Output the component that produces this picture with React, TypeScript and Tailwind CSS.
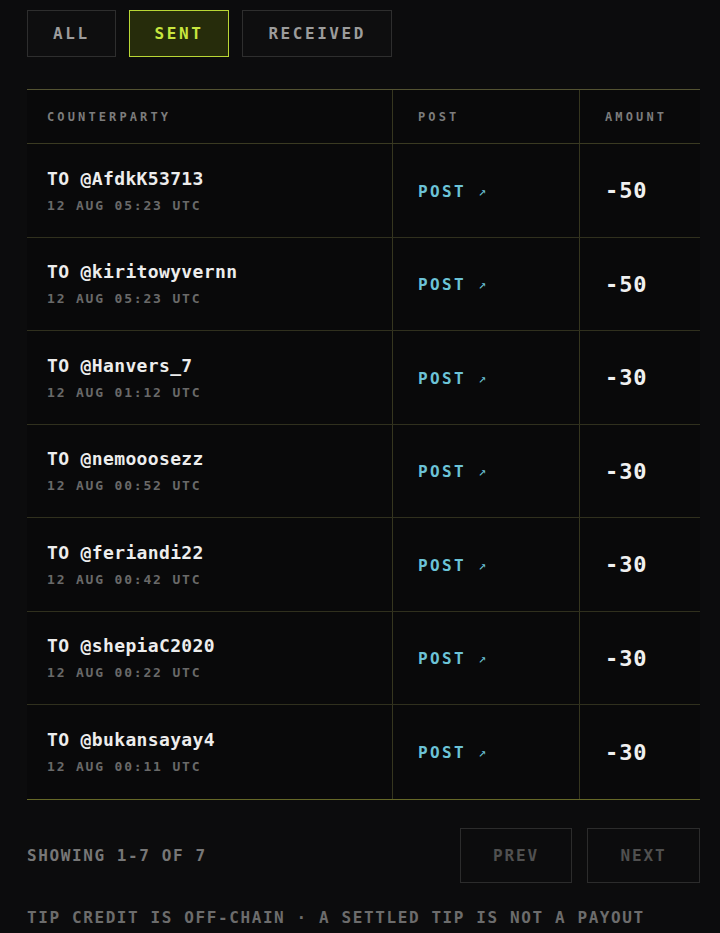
const rows = [
  { handle: '@AfdkK53713', time: '12 AUG 05:23 UTC', amount: -50 },
  { handle: '@kiritowyvernn', time: '12 AUG 05:23 UTC', amount: -50 },
  { handle: '@Hanvers_7', time: '12 AUG 01:12 UTC', amount: -30 },
  { handle: '@nemooosezz', time: '12 AUG 00:52 UTC', amount: -30 },
  { handle: '@feriandi22', time: '12 AUG 00:42 UTC', amount: -30 },
  { handle: '@shepiaC2020', time: '12 AUG 00:22 UTC', amount: -30 },
  { handle: '@bukansayay4', time: '12 AUG 00:11 UTC', amount: -30 },
]

const tabs = ['ALL', 'SENT', 'RECEIVED']

export default function App() {
  return (
    <div
      className="min-h-[933px] w-full bg-[#0c0c0d] pl-[27px] pr-[20px] pt-[10px] text-[#e8e8e8]"
      style={{ fontFamily: '"DejaVu Sans Mono", "Liberation Mono", monospace' }}
    >
      <div className="flex gap-[13px]">
        {tabs.map((t) => {
          const active = t === 'SENT'
          return (
            <button
              key={t}
              type="button"
              className={[
                'flex h-[47px] items-center border px-[25px] text-[16px] font-bold tracking-[0.16em]',
                active
                  ? 'border-[#b9d735] bg-[#262c0b] text-[#c8e63e]'
                  : 'border-[#2e2e2e] bg-[#0e0e0f] text-[#9c9c9c]',
              ].join(' ')}
            >
              {t}
            </button>
          )
        })}
      </div>

      <div className="mt-[32px] border-t border-b border-t-[#545332] border-b-[#666828] bg-[#09090a]">
        <div className="grid h-[54px] grid-cols-[366px_187px_1fr] border-b border-[#3a3a22] text-[12px] font-bold tracking-[0.26em] text-[#7c7c7c]">
          <div className="flex items-center border-r border-[#36361f] pl-[20px]">COUNTERPARTY</div>
          <div className="flex items-center border-r border-[#36361f] pl-[25px]">POST</div>
          <div className="flex items-center pl-[25px]">AMOUNT</div>
        </div>
        {rows.map((r, i) => (
          <div
            key={r.handle}
            className={[
              'grid grid-cols-[366px_187px_1fr]',
              i % 2 === 0 ? 'h-[94px]' : 'h-[93px]',
              i < rows.length - 1 ? 'border-b border-[#30301e]' : '',
            ].join(' ')}
          >
            <div className="flex flex-col justify-center gap-[6px] border-r border-[#36361f] pl-[20px]">
              <span className="text-[18px] font-bold leading-[24px] tracking-[0.02em] text-[#ededed]">
                TO {r.handle}
              </span>
              <span className="text-[13px] font-bold leading-[18px] tracking-[0.14em] text-[#696969]">
                {r.time}
              </span>
            </div>
            <div className="flex items-center border-r border-[#36361f] pl-[25px] pt-[2px]">
              <span className="text-[16px] font-bold tracking-[0.15em] text-[#6cc3d7]">POST</span>
              <span className="ml-[12px] text-[13px] text-[#6cc3d7]">↗</span>
            </div>
            <div className="flex items-center pl-[25px]">
              <span className="text-[22px] font-bold tracking-[0.04em] text-[#f0f0f0]">{r.amount}</span>
            </div>
          </div>
        ))}
      </div>

      <div className="mt-[28px] flex items-center justify-between">
        <span className="text-[16px] font-bold tracking-[0.1em] text-[#777777]">SHOWING 1-7 OF 7</span>
        <div className="flex gap-[15px]">
          <button
            type="button"
            className="flex h-[55px] w-[112px] items-center justify-center border border-[#2c2c2c] text-[16px] font-bold tracking-[0.12em] text-[#505050]"
          >
            PREV
          </button>
          <button
            type="button"
            className="flex h-[55px] w-[113px] items-center justify-center border border-[#2c2c2c] text-[16px] font-bold tracking-[0.12em] text-[#505050]"
          >
            NEXT
          </button>
        </div>
      </div>

      <p className="mt-[23px] text-[16px] font-bold tracking-[0.1em] text-[#6c6c6c]">
        TIP CREDIT IS OFF-CHAIN · A SETTLED TIP IS NOT A PAYOUT
      </p>
    </div>
  )
}
